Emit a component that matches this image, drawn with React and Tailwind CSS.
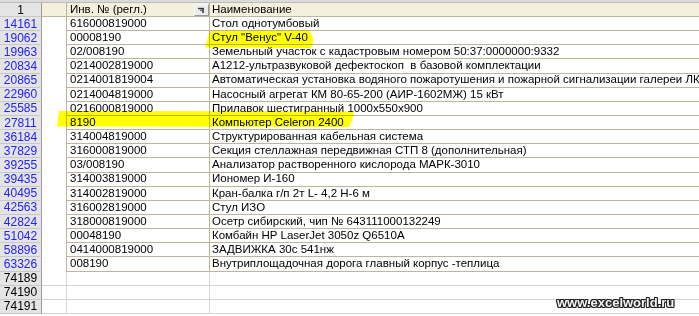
import React from 'react';

const rows = [
    ['14161', '616000819000', 'Стол однотумбовый'],
    ['19062', '00008190', 'Стул "Венус" V-40'],
    ['19963', '02/008190', 'Земельный участок с кадастровым номером 50:37:0000000:9332'],
    ['20834', '0214002819000', 'А1212-ультразвуковой дефектоскоп  в базовой комплектации'],
    ['20865', '0214001819004', 'Автоматическая установка водяного пожаротушения и пожарной сигнализации галереи ЛК№2'],
    ['22960', '0214004819000', 'Насосный агрегат КМ 80-65-200 (АИР-1602МЖ) 15 кВт'],
    ['25585', '0216000819000', 'Прилавок шестигранный 1000х550х900'],
    ['27811', '8190', 'Компьютер Celeron 2400'],
    ['36184', '314004819000', 'Структурированная кабельная система'],
    ['37829', '316000819000', 'Секция стеллажная передвижная СТП 8 (дополнительная)'],
    ['39255', '03/008190', 'Анализатор растворенного кислорода МАРК-3010'],
    ['39435', '314003819000', 'Иономер И-160'],
    ['40495', '314002819000', 'Кран-балка г/п 2т L- 4,2 Н-6 м'],
    ['42563', '316002819000', 'Стул ИЗО'],
    ['42824', '318000819000', 'Осетр сибирский, чип № 643111000132249'],
    ['51042', '00048190', 'Комбайн HP LaserJet 3050z Q6510A'],
    ['58896', '0414000819000', 'ЗАДВИЖКА 30с 541нж'],
    ['63326', '008190', 'Внутриплощадочная дорога главный корпус -теплица'],
];

const emptyRows = ['74189', '74190', '74191'];

// row header cell (left gray column)
const RowHead = ({ children, blue }) => (
    <div className={`w-[42px] shrink-0 flex items-center justify-center bg-[#e4e4e4] border-r border-b border-r-[#9c9c9c] border-b-[#c8c8c8] text-[12px] leading-none ${blue ? 'text-[#2222ff]' : 'text-black'}`}>
        {children}
    </div>
);

const DataRow = ({ num, inv, name }) => (
    <div className="flex h-[14.15px]">
        <RowHead blue>{num}</RowHead>
        <div className="w-[25px] shrink-0 bg-white border-r border-[#bdb59c]" />
        <div className="w-[143px] shrink-0 flex items-center pl-[3px] border-r border-b border-[#bdb59c] whitespace-pre overflow-hidden">
            {inv}
        </div>
        <div className="flex-1 flex items-center pl-[2px] border-b border-[#bdb59c] whitespace-pre overflow-hidden">
            {name}
        </div>
    </div>
);

const EmptyRow = ({ num }) => (
    <div className="flex h-[14.15px]">
        <RowHead>{num}</RowHead>
        <div className="w-[25px] shrink-0 border-r border-b border-[#d4d4d4]" />
        <div className="w-[143px] shrink-0 border-r border-b border-[#d4d4d4]" />
        <div className="flex-1 border-b border-[#d4d4d4]" />
    </div>
);

const FilterButton = () => (
    <div className="absolute right-0 top-[1px] w-[15px] h-[12px] bg-[#ececec] border border-[#f8f8f8] border-r-[#9a9a9a] border-b-[#9a9a9a] flex items-center justify-center">
        <svg width="9" height="7" viewBox="0 0 9 7">
            <path d="M1 1.5h6" stroke="#3a3a3a" strokeWidth="1.4" />
            <path d="M6 1v5" stroke="#3a3a3a" strokeWidth="1.6" />
            <path d="M2.5 2.5h3l-1.5 2z" fill="#5a5a5a" />
        </svg>
    </div>
);

export default function App() {
    return (
        <div className="relative w-[699px] h-[316px] overflow-hidden bg-white font-['Liberation_Sans',Arial,sans-serif] text-[11.5px] text-black leading-none">
            {/* bottom of the column letters strip */}
            <div className="h-[3px] bg-[#dadada] border-b border-[#bcbcbc]" />

            {/* header row */}
            <div className="flex h-[14px]">
                <RowHead>1</RowHead>
                <div className="w-[25px] shrink-0 bg-[#f4f0dc] border-r border-b border-[#bdb59c]" />
                <div className="relative w-[143px] shrink-0 flex items-center pl-[3px] bg-[#f4f0dc] border-r border-b border-[#bdb59c]">
                    Инв. № (регл.)
                    <FilterButton />
                </div>
                <div className="flex-1 flex items-center pl-[2px] bg-[#f4f0dc] border-b border-[#bdb59c]">
                    Наименование
                </div>
            </div>

            {rows.map(r => (
                <DataRow key={r[0]} num={r[0]} inv={r[1]} name={r[2]} />
            ))}
            {emptyRows.map(n => (
                <EmptyRow key={n} num={n} />
            ))}

            {/* marker highlights drawn over the sheet */}
            <svg className="absolute inset-0 pointer-events-none mix-blend-multiply" width="699" height="316">
                <path d="M210 31 L309 30.5 Q316 39 311 48 L205 47.5 Z" fill="#ffff00" />
                <path d="M59 111 L354 111.5 Q353 120 349 127 L57 126.5 Z" fill="#ffff00" />
            </svg>

            {/* site watermark */}
            <div className="absolute left-[557px] top-[296px] text-[13px] font-bold leading-none text-[#f4f4f4] [text-shadow:1px_0_0_#222,-1px_0_0_#222,0_1px_0_#222,0_-1px_0_#222,1px_1px_0_#222,-1px_-1px_0_#222,1px_-1px_0_#222,-1px_1px_0_#222]">
                www.excelworld.ru
            </div>
        </div>
    );
}
